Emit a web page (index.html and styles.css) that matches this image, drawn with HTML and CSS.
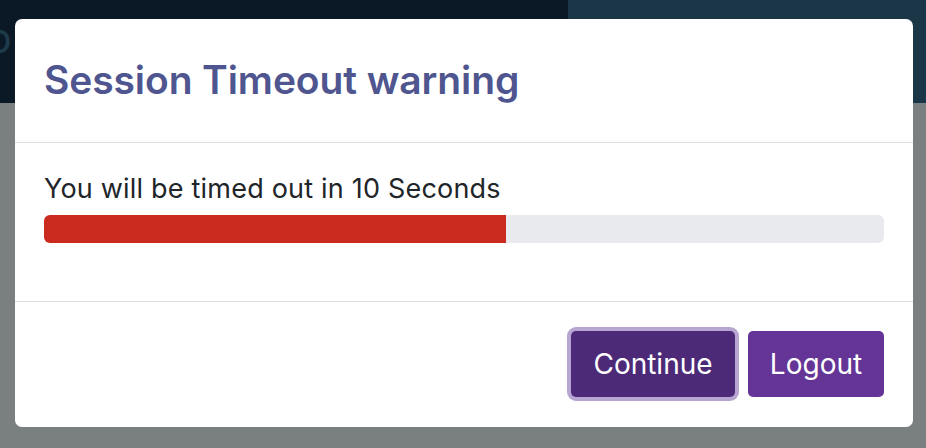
FILE: index.html
```html
<!DOCTYPE html>
<html>
<head>
<meta charset="utf-8">
<link rel="stylesheet" href="styles.css">
</head>
<body>
<div class="page">
  <div class="topbar">
    <div class="topbar-left"><span class="brand">b</span></div>
    <div class="topbar-right"></div>
  </div>
</div>
<div class="modal">
  <div class="modal-header">
    <h1 class="modal-title">Session Timeout warning</h1>
  </div>
  <div class="modal-body">
    <p class="message">You will be timed out in 10 Seconds</p>
    <div class="progress"><div class="progress-bar" style="width:55%"></div></div>
  </div>
  <div class="modal-footer">
    <button class="btn btn-continue">Continue</button>
    <button class="btn btn-logout">Logout</button>
  </div>
</div>
</body>
</html>
```
FILE: styles.css
```css
* { box-sizing: border-box; }
html, body { margin: 0; padding: 0; }
body {
  width: 926px;
  height: 448px;
  overflow: hidden;
  background: #7a807f;
  font-family: Inter, "Liberation Sans", Arial, sans-serif;
  position: relative;
}
.topbar {
  display: flex;
  height: 103px;
}
.topbar-left {
  width: 568px;
  background: #0a1925;
  overflow: hidden;
  position: relative;
}
.brand {
  position: absolute;
  left: -14px;
  top: 12px;
  font-size: 42px;
  color: #1e3a4b;
}
.topbar-right {
  flex: 1;
  background: #1b3646;
}
.modal {
  position: absolute;
  left: 15px;
  top: 19px;
  width: 898px;
  height: 408px;
  background: #fff;
  border-radius: 7px;
  display: flex;
  flex-direction: column;
}
.modal-header {
  height: 124px;
  border-bottom: 1px solid #dedfe1;
  padding: 0 29px;
  display: flex;
  align-items: center;
}
.modal-title {
  margin: 0;
  font-size: 39px;
  font-weight: 600;
  color: #4f568f;
  line-height: 1.2;
  letter-spacing: -0.1px;
}
.modal-body {
  height: 159px;
  border-bottom: 1px solid #dedfe1;
  padding: 28px 29px 0;
}
.message {
  margin: 0;
  font-size: 27px;
  line-height: 36px;
  color: #212529;
  letter-spacing: 0.2px;
}
.progress {
  margin-top: 8px;
  height: 28px;
  background: #e9eaee;
  border-radius: 6px;
  overflow: hidden;
  display: flex;
}
.progress-bar {
  background: #cb2a1f;
  height: 100%;
}
.modal-footer {
  flex: 1;
  display: flex;
  justify-content: flex-end;
  align-items: flex-start;
  gap: 13px;
  padding: 29px 29px 0;
}
.btn {
  height: 66px;
  border: none;
  border-radius: 5px;
  color: #fff;
  font-family: Inter, "Liberation Sans", Arial, sans-serif;
  font-size: 28px;
  padding: 0;
  cursor: pointer;
}
.btn-continue {
  width: 164px;
  background: #4c2a78;
  box-shadow: 0 0 0 4px #b9a5d2;
}
.btn-logout {
  width: 136px;
  background: #643596;
}
```
